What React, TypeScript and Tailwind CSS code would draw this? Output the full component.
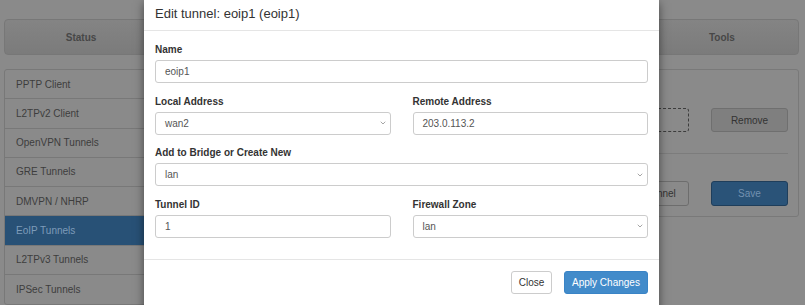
import { ChevronDown } from "lucide-react";

const TABS = ["Status", "Interfaces", "Tunnels", "Routing", "Tools"];

const SIDE_ITEMS = [
  "PPTP Client",
  "L2TPv2 Client",
  "OpenVPN Tunnels",
  "GRE Tunnels",
  "DMVPN / NHRP",
  "EoIP Tunnels",
  "L2TPv3 Tunnels",
  "IPSec Tunnels",
];

function Label({ children }: { children: React.ReactNode }) {
  return <div className="text-[10px] leading-[12px] font-bold text-[#333] mb-[4px]">{children}</div>;
}

function TextInput({ value }: { value: string }) {
  return (
    <div className="h-[23px] border border-[#ccc] rounded-[3px] bg-white flex items-center px-[9px] text-[10px] text-[#555]">
      {value}
    </div>
  );
}

function Select({ value }: { value: string }) {
  return (
    <div className="h-[23px] border border-[#ccc] rounded-[3px] bg-white flex items-center justify-between pl-[9px] pr-[3px] text-[10px] text-[#555]">
      <span>{value}</span>
      <ChevronDown size={8} strokeWidth={2} className="text-[#777]" />
    </div>
  );
}

export default function App() {
  return (
    <div
      className="relative w-[805px] h-[305px] overflow-hidden bg-[#8a8a8a]"
      style={{ fontFamily: '"Liberation Sans", Arial, sans-serif' }}
    >
      {/* Page behind the backdrop (already dimmed colours) */}
      <div className="pt-[19px] pl-[4px] pr-[6px]">
        <div className="flex gap-[6px]">
          {TABS.map((t) => (
            <div
              key={t}
              className="flex-1 h-[36px] rounded-[4px] border border-[#777] bg-gradient-to-b from-[#848484] to-[#7b7b7b] flex items-center justify-center text-[10px] font-bold text-[#474747]"
            >
              {t}
            </div>
          ))}
        </div>

        <div className="mt-[14px] flex gap-[12px]">
          {/* Sidebar */}
          <div className="w-[206px] border border-[#787878] rounded-[3px] divide-y divide-[#787878]">
            {SIDE_ITEMS.map((item) => {
              const active = item === "EoIP Tunnels";
              return (
                <div
                  key={item}
                  className={`h-[29.25px] flex items-center pl-[11px] text-[10px] ${
                    active ? "bg-[#285176] text-[#7e9bb9]" : "text-[#3d3d3d]"
                  }`}
                >
                  {item}
                </div>
              );
            })}
          </div>

          {/* Right panel */}
          <div className="flex-1 h-[148px] border border-[#797979] rounded-[3px] pt-[38px] pl-[12px] pr-[10px]">
            <div className="flex gap-[22px]">
              <div className="flex-1 h-[24px] border border-dashed border-[#3c3c3c] rounded-[3px]" />
              <div className="w-[77px] h-[24px] rounded-[3px] border border-[#6f6f6f] bg-[#7f7f7f] flex items-center justify-center text-[10px] text-[#333]">
                Remove
              </div>
            </div>
            <div className="mt-[21px] border-t border-[#7c7c7c]" />
            <div className="mt-[27px] flex justify-end gap-[22px]">
              <div className="w-[77px] h-[25px] rounded-[3px] border border-[#6d6d6d] flex items-center justify-center text-[10px] text-[#333]">
                Add Tunnel
              </div>
              <div className="w-[77px] h-[25px] rounded-[3px] border border-[#1f3e5b] bg-[#2a5378] flex items-center justify-center text-[10px] text-[#7391b0]">
                Save
              </div>
            </div>
          </div>
        </div>
      </div>

      {/* Modal dialog */}
      <div className="absolute left-[144px] top-0 w-[515px] h-[320px] bg-white shadow-[0_3px_9px_rgba(0,0,0,0.5)]">
        <div className="h-[31px] border-b border-[#e5e5e5] flex items-center px-[11px] pb-[2px]">
          <span className="text-[13px] text-[#333]">Edit tunnel: eoip1 (eoip1)</span>
        </div>

        <div className="px-[11px] pt-[13px] pb-[21.5px] flex flex-col gap-[12.5px]">
          <div>
            <Label>Name</Label>
            <TextInput value="eoip1" />
          </div>
          <div className="grid grid-cols-2 gap-x-[22px]">
            <div>
              <Label>Local Address</Label>
              <Select value="wan2" />
            </div>
            <div>
              <Label>Remote Address</Label>
              <TextInput value="203.0.113.2" />
            </div>
          </div>
          <div>
            <Label>Add to Bridge or Create New</Label>
            <Select value="lan" />
          </div>
          <div className="grid grid-cols-2 gap-x-[22px]">
            <div>
              <Label>Tunnel ID</Label>
              <TextInput value="1" />
            </div>
            <div>
              <Label>Firewall Zone</Label>
              <Select value="lan" />
            </div>
          </div>
        </div>

        <div className="border-t border-[#e5e5e5] px-[11px] pt-[11px] flex justify-end gap-[12px]">
          <div className="w-[41px] h-[23px] rounded-[3px] border border-[#ccc] bg-white flex items-center justify-center text-[10px] text-[#333]">
            Close
          </div>
          <div className="w-[84px] h-[23px] rounded-[3px] border border-[#3a84c6] bg-[#428bca] flex items-center justify-center text-[10px] text-white">
            Apply Changes
          </div>
        </div>
      </div>
    </div>
  );
}
